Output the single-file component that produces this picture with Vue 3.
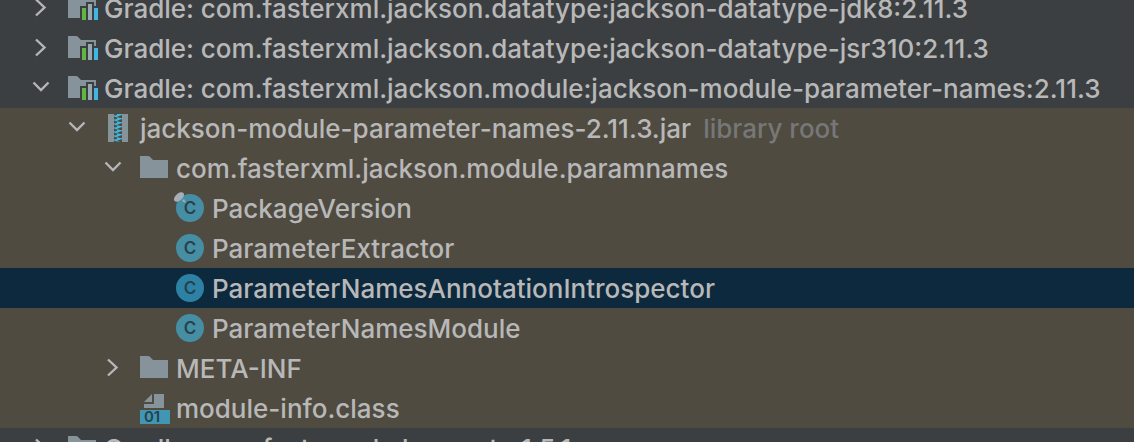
<script setup>
const rows = [
  { level: 0, arrow: 'right', icon: 'library', name: 'Gradle: com.fasterxml.jackson.datatype:jackson-datatype-jdk8:2.11.3' },
  { level: 0, arrow: 'right', icon: 'library', name: 'Gradle: com.fasterxml.jackson.datatype:jackson-datatype-jsr310:2.11.3' },
  { level: 0, arrow: 'down', icon: 'library', name: 'Gradle: com.fasterxml.jackson.module:jackson-module-parameter-names:2.11.3' },
  { level: 1, arrow: 'down', icon: 'jar', name: 'jackson-module-parameter-names-2.11.3.jar', note: 'library root', inside: true },
  { level: 2, arrow: 'down', icon: 'folder', name: 'com.fasterxml.jackson.module.paramnames', inside: true },
  { level: 3, icon: 'class', pinned: true, name: 'PackageVersion', inside: true },
  { level: 3, icon: 'class', name: 'ParameterExtractor', inside: true },
  { level: 3, icon: 'class', name: 'ParameterNamesAnnotationIntrospector', inside: true, selected: true },
  { level: 3, icon: 'class', name: 'ParameterNamesModule', inside: true },
  { level: 2, arrow: 'right', icon: 'folder', name: 'META-INF', inside: true },
  { level: 2, icon: 'binary', name: 'module-info.class', inside: true },
  { level: 0, arrow: 'right', icon: 'library', name: 'Gradle: com.fasterxml:classmate:1.5.1' },
]
const teeth = Array.from({ length: 7 }, (_, i) => 2 + i * 4)
</script>

<template>
  <main class="panel">
    <ul class="tree" role="tree" aria-label="External libraries">
      <li
        v-for="row in rows"
        :key="row.name"
        role="treeitem"
        :aria-level="row.level + 1"
        :aria-selected="!!row.selected"
        :aria-expanded="row.arrow ? row.arrow === 'down' : undefined"
        class="row"
        :class="['level-' + row.level, { inside: row.inside, selected: row.selected }]"
      >
        <button v-if="row.arrow" class="toggle" type="button" :aria-label="'Toggle ' + row.name">
          <svg width="34" height="32" viewBox="0 0 34 32">
            <path v-if="row.arrow === 'right'" class="chevron" d="M12 7.5L20.5 15.5L12 23.5" />
            <path v-else class="chevron" d="M9.5 10.5L17 18L24.5 10.5" />
          </svg>
        </button>
        <span v-else class="toggle"></span>

        <svg class="icon" width="32" height="32" viewBox="0 0 32 32" aria-hidden="true">
          <template v-if="row.icon === 'library'">
            <path class="grey" d="M2 4H10Q12 4 13 6L15 8H30V14H28V10H20V14H14V26H2Z" />
            <path class="green" d="M16 16H20V28H16Z" />
            <path class="silver" d="M22 12H26V28H22Z" />
            <path class="blue" d="M28 16H32V28H28Z" />
          </template>
          <path v-else-if="row.icon === 'folder'" class="grey" d="M2 4H10Q12 4 13 6L15 8H30V26H2Z" />
          <template v-else-if="row.icon === 'jar'">
            <path class="grey" d="M6 2H12V30H6ZM20 2H26V30H20Z" />
            <path
              v-for="y in teeth"
              :key="y"
              class="tooth"
              :d="`M15 ${y}H20V${y + 1}L17 ${y + 2}H15L18 ${y + 3.5}H15L12 ${y + 2.5}V${y + 1.5}L15 ${y + 1}Z`"
            />
          </template>
          <template v-else-if="row.icon === 'class'">
            <circle class="disc" cx="16" cy="16" r="14" />
            <text class="letter" x="16" y="22">C</text>
            <template v-if="row.pinned">
              <ellipse class="pin" cx="5" cy="5" rx="6" ry="3.5" transform="rotate(-42 5 5)" />
              <path class="pin" d="M8 9L10 7L12 11Z" />
            </template>
          </template>
          <template v-else>
            <path class="grey" d="M6 10L14 2V10ZM16 2H26V16H6V12H16Z" />
            <path class="badge" d="M2 18H32V32H2Z" />
            <text class="digits" x="14" y="30">01</text>
          </template>
        </svg>
        <span class="name">{{ row.name }}</span>
        <span v-if="row.note" class="note">{{ row.note }}</span>
      </li>
    </ul>
  </main>
</template>

<style>
body {
  margin: 0;
  background: #3c3f41;
}
</style>

<style scoped>
.panel {
  height: 100vh;
  overflow: hidden;
  background: #3c3f41;
  color: #b8b8b8;
  font: 500 26px/40px Inter, "Liberation Sans", sans-serif;
}
.tree {
  margin: -12px 0 0;
  padding: 0;
  list-style: none;
}
.row {
  display: flex;
  align-items: center;
  height: 40px;
  padding-left: 24px;
  white-space: nowrap;
}
.level-1 { padding-left: 60px; }
.level-2 { padding-left: 96px; }
.level-3 { padding-left: 132px; }
.inside { background: #4f4b41; }
.selected { background: #0d293e; }
.toggle {
  flex: none;
  width: 34px;
  height: 32px;
  margin: 0 8px 0 0;
  padding: 0;
  border: 0;
  background: none;
}
.toggle svg { display: block; }
.chevron {
  fill: none;
  stroke: #b4b6b7;
  stroke-width: 2.4;
}
.icon {
  flex: none;
  margin-right: 6px;
  overflow: visible;
}
.name,
.note {
  padding-top: 2px;
}
.grey { fill: #87939a; }
.silver { fill: #9aa7b0; }
.green { fill: #62b543; }
.blue { fill: #40b6e0; }
.tooth { fill: #40b6e0; }
.disc { fill: #458ea3; }
.selected .disc { fill: #2d81a5; }
.letter {
  fill: #27424c;
  font: 600 17px Inter, sans-serif;
  text-anchor: middle;
}
.pin { fill: #a5b0b6; }
.badge { fill: #4196b3; }
.digits {
  fill: #27424c;
  font: 600 15px Inter, sans-serif;
  text-anchor: middle;
}
.note {
  margin-left: 12px;
  color: #777777;
}
</style>
